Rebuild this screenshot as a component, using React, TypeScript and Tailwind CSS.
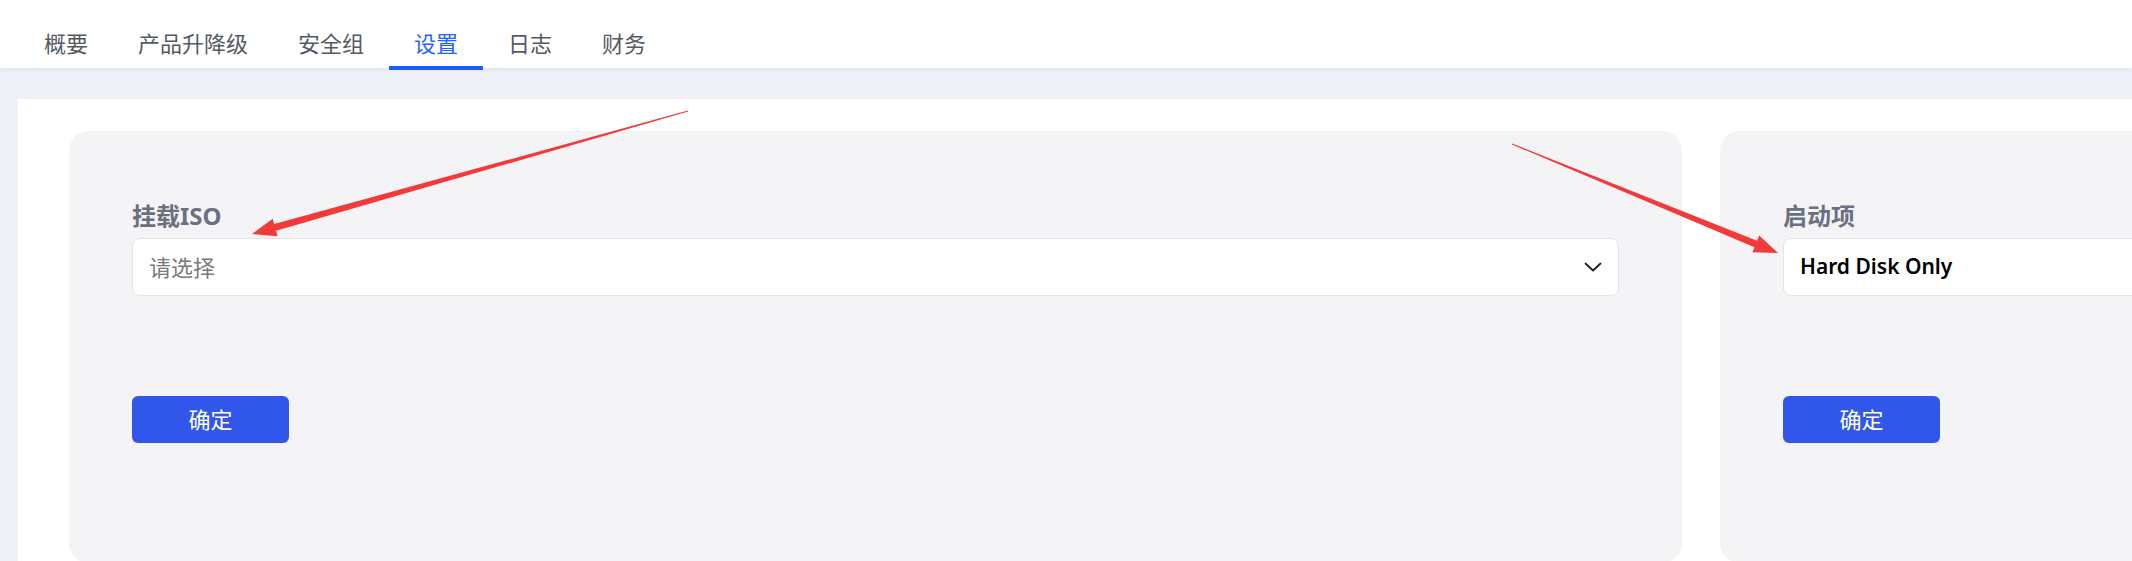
import React from "react";

const tabs = ["概要", "产品升降级", "安全组", "设置", "日志", "财务"];

type Pt = [number, number];

// tapered annotation arrow: thin tail, thicker shaft near the head
function arrowPoints(s: Pt, t: Pt, w0 = 1, w1 = 7, headLen = 24, headW = 18) {
  const dx = t[0] - s[0];
  const dy = t[1] - s[1];
  const len = Math.hypot(dx, dy);
  const ux = dx / len;
  const uy = dy / len;
  const nx = -uy;
  const ny = ux;
  const bx = t[0] - ux * headLen;
  const by = t[1] - uy * headLen;
  const pts: Pt[] = [
    [s[0] + (nx * w0) / 2, s[1] + (ny * w0) / 2],
    [bx + (nx * w1) / 2, by + (ny * w1) / 2],
    [bx + (nx * headW) / 2, by + (ny * headW) / 2],
    t,
    [bx - (nx * headW) / 2, by - (ny * headW) / 2],
    [bx - (nx * w1) / 2, by - (ny * w1) / 2],
    [s[0] - (nx * w0) / 2, s[1] - (ny * w0) / 2],
  ];
  return pts.map((p) => p.join(",")).join(" ");
}

function Chevron() {
  return (
    <svg width="18" height="10" viewBox="0 0 18 10" fill="none">
      <path d="M1.5 1.5 L9 8.5 L16.5 1.5" stroke="#1f1f1f" strokeWidth="1.8" strokeLinecap="round" strokeLinejoin="round" />
    </svg>
  );
}

function SettingCard({ label, value, placeholder }: { label: string; value?: string; placeholder?: string }) {
  return (
    <div className="w-[1613px] h-[432px] shrink-0 rounded-[20px] bg-[#f4f4f6] px-[63px] pt-[69px]">
      <div className="text-[24px] leading-[32px] font-bold text-[#6b7080]">{label}</div>
      <div className="mt-[6px] h-[58px] rounded-lg border border-[#e3e4e8] bg-white pl-[16px] pr-[16px] flex items-center justify-between">
        {value ? (
          <span className="text-[21px] font-semibold text-black">{value}</span>
        ) : (
          <span className="text-[22px] text-[#7a7a7a]">{placeholder}</span>
        )}
        <Chevron />
      </div>
      <button className="mt-[100px] w-[157px] h-[47px] rounded-[6px] bg-[#3157ea] text-white text-[22px] flex items-center justify-center">
        确定
      </button>
    </div>
  );
}

export default function App() {
  return (
    <div
      className="relative w-[2132px] h-[561px] overflow-hidden bg-[#eef1f8] flex flex-col"
      style={{ fontFamily: '"Noto Sans", "Noto Sans CJK SC", sans-serif' }}
    >
      {/* Tabs */}
      <div className="relative z-10 h-[68px] shrink-0 bg-white shadow-[0_2px_5px_rgba(30,40,80,0.07)] flex pl-[19px]">
        {tabs.map((t) => {
          const active = t === "设置";
          return (
            <div
              key={t}
              className={
                "relative px-[25px] pt-[28px] text-[22px] leading-[30px] " +
                (active ? "text-[#1f63ff]" : "text-[#555a62]")
              }
            >
              {t}
              {active && <span className="absolute left-0 right-0 bottom-[-2px] h-1 bg-[#1a5cff]" />}
            </div>
          );
        })}
      </div>

      {/* Content */}
      <div className="flex-1 pt-[31px] pl-[18px] flex">
        <div className="flex-1 bg-white pl-[51px] pt-[32px] flex gap-[38px] overflow-hidden">
          <SettingCard label="挂载ISO" placeholder="请选择" />
          <SettingCard label="启动项" value="Hard Disk Only" />
        </div>
      </div>

      {/* Annotation arrows */}
      <svg className="absolute inset-0 pointer-events-none" width="2132" height="561">
        <polygon points={arrowPoints([688, 111], [252, 234])} fill="#f23a3a" />
        <polygon points={arrowPoints([1512, 144], [1778, 253])} fill="#f23a3a" />
      </svg>
    </div>
  );
}
